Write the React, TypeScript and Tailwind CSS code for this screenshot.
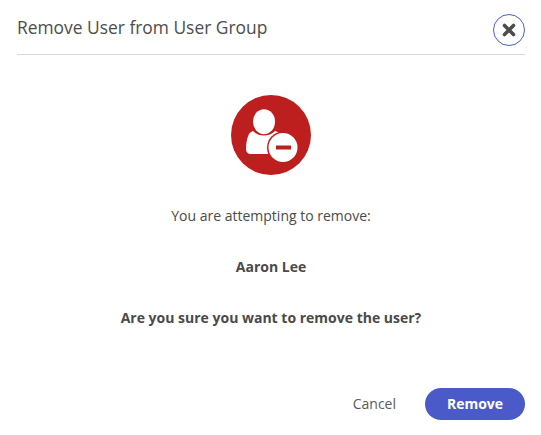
import React from 'react';

function RemoveUserIcon() {
  return (
    <svg width="80" height="80" viewBox="0 0 80 80">
      <circle cx="40" cy="40" r="40" fill="#bd1e1e" />
      <ellipse cx="33" cy="26.700" rx="11" ry="12.500" fill="#fff" />
      <path d="M22 36c3 3 7 4.500 11 4.500s8-1.500 11-4.500c3 .8 5 2 6 4v19H20c-3 0-5-2-5-5 0-6 1-11 3-15 1-1.500 2.500-2.500 4-3z" fill="#fff" />
      <circle cx="52" cy="52.500" r="16" fill="#bd1e1e" />
      <circle cx="52" cy="52.500" r="14.500" fill="#fff" />
      <rect x="45" y="50.500" width="15" height="4" fill="#bd1e1e" />
    </svg>
  );
}

export default function App() {
  return (
    <div className="w-[541px] h-[435px] bg-white text-[#4a4a4a] font-['Open_Sans',sans-serif] flex flex-col overflow-hidden">
      <div className="ml-[17px] mr-4 h-[55px] border-b border-[#d8d8d8] flex items-center justify-between pt-[5px]">
        <h1 className="text-[17.4px] font-medium text-[#4d4d4d] mb-1">Remove User from User Group</h1>
        <button className="w-8 h-8 rounded-full border border-[#4a5fc9] flex items-center justify-center">
          <svg width="14" height="14" viewBox="0 0 14 14">
            <path d="M2.500 2.500l9 9M11.500 2.500l-9 9" stroke="#4d4d4d" strokeWidth="3.600" strokeLinecap="round" />
          </svg>
        </button>
      </div>

      <div className="flex flex-col items-center pt-10 pl-[1px]">
        <RemoveUserIcon />
        <p className="mt-[31px] text-sm leading-5">You are attempting to remove:</p>
        <p className="mt-[31px] text-sm leading-5 font-bold">Aaron Lee</p>
        <p className="mt-[31px] text-sm leading-5 font-bold">Are you sure you want to remove the user?</p>
      </div>

      <div className="mt-[60px] mr-4 flex items-center justify-end">
        <button className="text-sm text-[#5a5a5a] mr-[29px]">Cancel</button>
        <button className="w-[100px] h-8 rounded-full bg-[#4a5bc9] text-white text-sm font-bold">Remove</button>
      </div>
    </div>
  );
}
